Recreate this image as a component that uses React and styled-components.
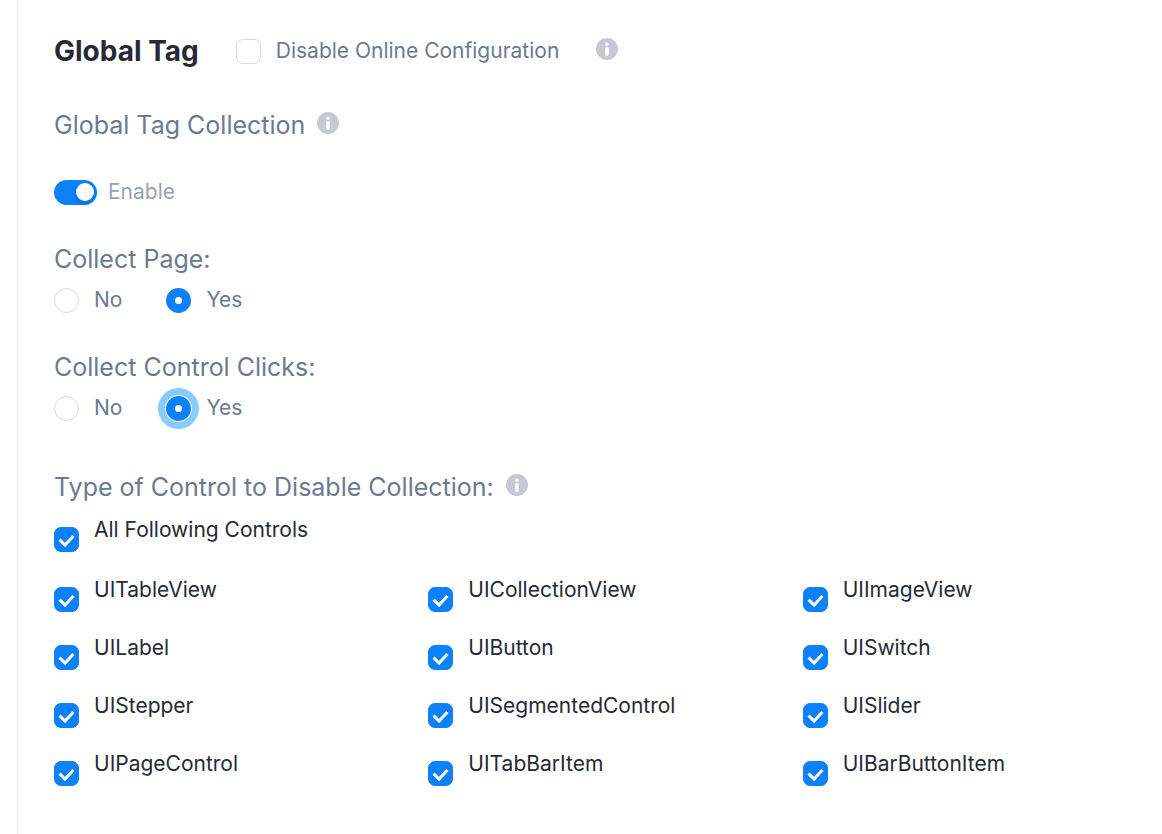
import { useState } from "react";
import styled, { createGlobalStyle } from "styled-components";

const GlobalStyle = createGlobalStyle`
  * {
    box-sizing: border-box;
  }
  body {
    margin: 0;
    background-color: #fff;
    font-family: Inter, "Liberation Sans", sans-serif;
    color: #252a36;
  }
`;

const Panel = styled.main`
  min-height: 100vh;
  margin-left: 17px;
  padding: 32px 0 44px 36px;
  border-left: 1px solid #e6e6e8;
`;
const Header = styled.header`
  display: flex;
  align-items: center;
  height: 38px;
  margin-bottom: 39px;
`;
const Title = styled.h1`
  margin: 0 37px 0 0;
  font-size: 28px;
  font-weight: 700;
  line-height: 38px;
`;
const Group = styled.fieldset`
  min-width: 0;
  margin: ${(props) => props.$gap || 38}px 0 0;
  padding: 0;
  border: none;
`;
const SectionTitle = styled.h2`
  display: flex;
  align-items: center;
  margin: 0 0 38px;
  font-size: 25px;
  font-weight: 400;
  line-height: 32px;
  color: #6b7a90;
`;
const Legend = styled.legend`
  display: flex;
  align-items: center;
  padding: 0;
  font-size: 25px;
  line-height: 32px;
  color: #6b7a90;
`;
const Info = styled.button`
  all: unset;
  display: flex;
  margin-left: ${(props) => props.$space || 12}px;
  padding-bottom: 5px;
  cursor: pointer;
`;
const Option = styled.label`
  display: flex;
  align-items: center;
  gap: 15px;
  font-size: 21px;
  line-height: 26px;
  color: #6b7a90;
`;
const ControlOption = styled(Option)`
  align-items: flex-start;
  color: #252a36;
  input {
    margin-top: 10px;
  }
`;
const Radios = styled.div`
  display: flex;
  gap: 44px;
  margin-top: 12px;
`;
const Checkbox = styled.input`
  appearance: none;
  flex: none;
  width: 25px;
  height: 25px;
  margin: 0;
  border: 1px solid #d9d9d9;
  border-radius: 7px;
  background-color: #fff;
  &:checked {
    border-color: #0d80fb;
    background: #0d80fb
      url("data:image/svg+xml,%3Csvg xmlns='http://www.w3.org/2000/svg' viewBox='0 0 23 23'%3E%3Cpath d='M4.5 11.6l5.6 5.4 8.3-9' fill='none' stroke='white' stroke-width='3'/%3E%3C/svg%3E")
      center / 23px no-repeat;
  }
`;
const Radio = styled.input`
  appearance: none;
  flex: none;
  width: 25px;
  height: 25px;
  margin: 0;
  border: 1px solid #d9d9d9;
  border-radius: 50%;
  background-color: #fff;
  &:checked {
    border: 9px solid #0d80fb;
  }
  &:focus {
    outline: none;
    box-shadow: 0 0 0 1px #fff, 0 0 0 8px #86ccff;
  }
`;
const SwitchLabel = styled.label`
  display: flex;
  align-items: center;
  gap: 11px;
  font-size: 21px;
  line-height: 26px;
  color: #98a3b3;
`;
const Switch = styled.input`
  appearance: none;
  display: flex;
  align-items: center;
  width: 43px;
  height: 25px;
  margin: 0;
  padding: 0 3px;
  border-radius: 13px;
  background-color: #c5c9d3;
  &::before {
    content: "";
    width: 18px;
    height: 18px;
    border-radius: 50%;
    background-color: #fff;
    box-shadow: 0 3px 5px rgba(0, 30, 80, 0.2);
  }
  &:checked {
    justify-content: flex-end;
    background-color: #0d80fb;
  }
`;
const AllControls = styled.div`
  margin-top: 14px;
`;
const Controls = styled.div`
  display: grid;
  grid-template-columns: repeat(3, 1fr);
  gap: 23px 15px;
  margin-top: 25px;
`;

const controls = [
  "UITableView",
  "UICollectionView",
  "UIImageView",
  "UILabel",
  "UIButton",
  "UISwitch",
  "UIStepper",
  "UISegmentedControl",
  "UISlider",
  "UIPageControl",
  "UITabBarItem",
  "UIBarButtonItem",
];

const InfoButton = ({ label, space }) => (
  <Info type="button" aria-label={label} $space={space}>
    <svg width="22" height="22" viewBox="0 0 22 22">
      <circle cx="11" cy="11" r="11" fill="#c5c9d3" />
      <circle cx="11" cy="6.3" r="1.8" fill="#fff" />
      <path d="M11 11v5" stroke="#fff" strokeWidth="3.8" strokeLinecap="round" />
    </svg>
  </Info>
);

const YesNo = ({ title, name, focused }) => (
  <Group>
    <Legend>{title}</Legend>
    <Radios>
      <Option>
        <Radio type="radio" name={name} value="no" />
        No
      </Option>
      <Option>
        <Radio
          type="radio"
          name={name}
          value="yes"
          defaultChecked
          autoFocus={focused}
        />
        Yes
      </Option>
    </Radios>
  </Group>
);

export default function App() {
  const [selected, setSelected] = useState(controls);

  const toggle = (name) => {
    setSelected((prev) =>
      prev.includes(name) ? prev.filter((n) => n !== name) : [...prev, name]
    );
  };
  const toggleAll = (e) => setSelected(e.target.checked ? controls : []);

  return (
    <>
      <GlobalStyle />
      <Panel>
        <Header>
          <Title>Global Tag</Title>
          <Option>
            <Checkbox type="checkbox" />
            Disable Online Configuration
          </Option>
          <InfoButton label="About online configuration" space={37} />
        </Header>

        <SectionTitle>
          Global Tag Collection
          <InfoButton label="About global tag collection" />
        </SectionTitle>
        <SwitchLabel>
          <Switch type="checkbox" role="switch" defaultChecked />
          Enable
        </SwitchLabel>

        <YesNo title="Collect Page:" name="page" />
        <YesNo title="Collect Control Clicks:" name="clicks" focused />

        <Group $gap={50}>
          <Legend>
            Type of Control to Disable Collection:
            <InfoButton label="About disabled controls" />
          </Legend>
          <AllControls>
            <ControlOption>
              <Checkbox
                type="checkbox"
                checked={selected.length === controls.length}
                onChange={toggleAll}
              />
              All Following Controls
            </ControlOption>
          </AllControls>
          <Controls>
            {controls.map((name) => (
              <ControlOption key={name}>
                <Checkbox
                  type="checkbox"
                  checked={selected.includes(name)}
                  onChange={() => toggle(name)}
                />
                {name}
              </ControlOption>
            ))}
          </Controls>
        </Group>
      </Panel>
    </>
  );
}
